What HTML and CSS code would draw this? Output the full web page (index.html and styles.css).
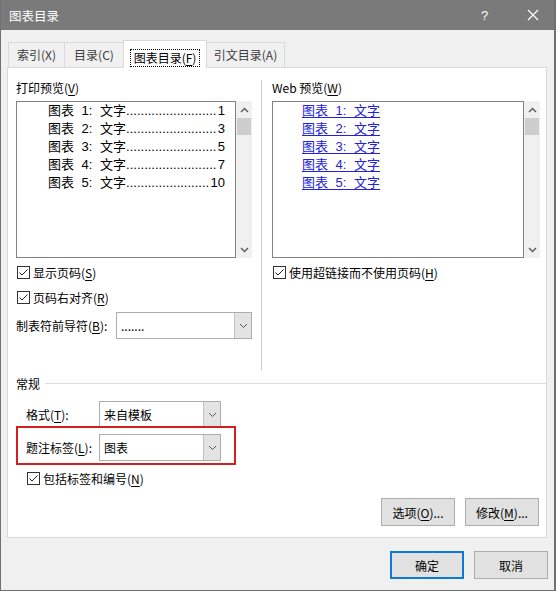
FILE: index.html
```html
<!DOCTYPE html>
<html lang="zh-CN">
<head>
<meta charset="utf-8">
<title>图表目录</title>
<link rel="stylesheet" href="styles.css">
</head>
<body>
<div class="window">
  <div class="titlebar">
    <span class="title">图表目录</span>
    <span class="help">?</span>
    <span class="close"><svg width="12" height="12" viewBox="0 0 12 12"><path d="M1 1 L11 11 M11 1 L1 11" stroke="#fff" stroke-width="1.2" fill="none"/></svg></span>
  </div>

  <div class="tabs">
    <div class="tab t1">索引(X)</div>
    <div class="tab t2">目录(C)</div>
    <div class="tab active"><span class="focus">图表目录(<u>F</u>)</span></div>
    <div class="tab t4">引文目录(A)</div>
  </div>

  <div class="panel">
    <div class="top">
      <div class="col left">
        <div class="label">打印预览(<u>V</u>)</div>
        <div class="listrow">
          <div class="list print">
            <div class="entry"><span class="cap">图表 1: 文字</span><span class="dots">.........................</span><span class="num">1</span></div>
            <div class="entry"><span class="cap">图表 2: 文字</span><span class="dots">.........................</span><span class="num">3</span></div>
            <div class="entry"><span class="cap">图表 3: 文字</span><span class="dots">.........................</span><span class="num">5</span></div>
            <div class="entry"><span class="cap">图表 4: 文字</span><span class="dots">.........................</span><span class="num">7</span></div>
            <div class="entry"><span class="cap">图表 5: 文字</span><span class="dots">.......................</span><span class="num">10</span></div>
          </div>
          <div class="sb">
            <div class="sb-arrow"><svg width="9" height="6" viewBox="0 0 9 6"><path d="M1 5 L4.5 1.5 L8 5" stroke="#606060" stroke-width="1.5" fill="none"/></svg></div>
            <div class="sb-thumb"></div>
            <div class="sb-space"></div>
            <div class="sb-arrow"><svg width="9" height="6" viewBox="0 0 9 6"><path d="M1 1 L4.5 4.5 L8 1" stroke="#606060" stroke-width="1.5" fill="none"/></svg></div>
          </div>
        </div>
        <div class="check c1">
          <span class="box"><svg width="13" height="13" viewBox="0 0 13 13"><rect x="0.5" y="0.5" width="12" height="12" fill="#fff" stroke="#333"/><path d="M2.5 6.5 L5 9 L10.5 3.5" stroke="#222" stroke-width="1" fill="none"/></svg></span>
          <span>显示页码(<u>S</u>)</span>
        </div>
        <div class="check c2">
          <span class="box"><svg width="13" height="13" viewBox="0 0 13 13"><rect x="0.5" y="0.5" width="12" height="12" fill="#fff" stroke="#333"/><path d="M2.5 6.5 L5 9 L10.5 3.5" stroke="#222" stroke-width="1" fill="none"/></svg></span>
          <span>页码右对齐(<u>R</u>)</span>
        </div>
        <div class="field leader">
          <span class="flabel wide">制表符前导符(<u>B</u>):</span>
          <div class="combo w136">
            <span class="val">.......</span>
            <span class="cbtn"><svg width="9" height="6" viewBox="0 0 9 6"><path d="M1 1 L4.5 4.5 L8 1" stroke="#555" stroke-width="1" fill="none"/></svg></span>
          </div>
        </div>
      </div>

      <div class="vdiv"></div>

      <div class="col right">
        <div class="label">Web 预览(<u>W</u>)</div>
        <div class="listrow">
          <div class="list web">
            <div class="entry"><span class="link">图表 1: 文字</span></div>
            <div class="entry"><span class="link">图表 2: 文字</span></div>
            <div class="entry"><span class="link">图表 3: 文字</span></div>
            <div class="entry"><span class="link">图表 4: 文字</span></div>
            <div class="entry"><span class="link">图表 5: 文字</span></div>
          </div>
          <div class="sb">
            <div class="sb-arrow"><svg width="9" height="6" viewBox="0 0 9 6"><path d="M1 5 L4.5 1.5 L8 5" stroke="#606060" stroke-width="1.5" fill="none"/></svg></div>
            <div class="sb-thumb"></div>
            <div class="sb-space"></div>
            <div class="sb-arrow"><svg width="9" height="6" viewBox="0 0 9 6"><path d="M1 1 L4.5 4.5 L8 1" stroke="#606060" stroke-width="1.5" fill="none"/></svg></div>
          </div>
        </div>
        <div class="check c3">
          <span class="box"><svg width="13" height="13" viewBox="0 0 13 13"><rect x="0.5" y="0.5" width="12" height="12" fill="#fff" stroke="#333"/><path d="M2.5 6.5 L5 9 L10.5 3.5" stroke="#222" stroke-width="1" fill="none"/></svg></span>
          <span>使用超链接而不使用页码(<u>H</u>)</span>
        </div>
      </div>
    </div>

    <div class="section">
      <span>常规</span>
      <span class="hline"></span>
    </div>

    <div class="general">
      <div class="field f1">
        <span class="flabel">格式(<u>T</u>):</span>
        <div class="combo w122">
          <span class="val">来自模板</span>
          <span class="cbtn"><svg width="9" height="6" viewBox="0 0 9 6"><path d="M1 1 L4.5 4.5 L8 1" stroke="#555" stroke-width="1" fill="none"/></svg></span>
        </div>
      </div>
      <div class="field f2">
        <span class="flabel">题注标签(<u>L</u>):</span>
        <div class="combo w122">
          <span class="val">图表</span>
          <span class="cbtn"><svg width="9" height="6" viewBox="0 0 9 6"><path d="M1 1 L4.5 4.5 L8 1" stroke="#555" stroke-width="1" fill="none"/></svg></span>
        </div>
      </div>
      <div class="check c4">
        <span class="box"><svg width="13" height="13" viewBox="0 0 13 13"><rect x="0.5" y="0.5" width="12" height="12" fill="#fff" stroke="#333"/><path d="M2.5 6.5 L5 9 L10.5 3.5" stroke="#222" stroke-width="1" fill="none"/></svg></span>
        <span>包括标签和编号(<u>N</u>)</span>
      </div>
    </div>

    <div class="panel-buttons">
      <button class="btn">选项(<u>O</u>)...</button>
      <button class="btn">修改(<u>M</u>)...</button>
    </div>

    <div class="highlight"></div>
  </div>

  <div class="footer">
    <button class="btn big primary">确定</button>
    <button class="btn big">取消</button>
  </div>
</div>
</body>
</html>
```

FILE: styles.css
```css
* { box-sizing: border-box; }
html, body { margin: 0; padding: 0; }
body {
  font-family: "Noto Sans CJK SC", "Microsoft YaHei", sans-serif;
  font-size: 12px;
  color: #000;
  background: #f0f0f0;
}
u { text-decoration: underline; text-underline-offset: 2px; }

.window {
  width: 556px;
  height: 591px;
  background: #f0f0f0;
  border: 1px solid #707070;
  border-top: 0;
  border-right-width: 2px;
}

.titlebar {
  height: 30px;
  background: #7a7a7a;
  color: #fff;
  display: flex;
  align-items: center;
  padding-left: 8px;
  font-size: 12.5px;
}
.titlebar .title { flex: 1; }
.titlebar .help { width: 10px; margin-right: 36px; font-family: "Liberation Sans", sans-serif; font-size: 13px; }
.titlebar .close { width: 12px; height: 12px; margin-right: 15px; display: flex; }

.tabs {
  height: 37px;
  display: flex;
  align-items: flex-end;
  padding-left: 7px;
  color: #3c3c3c;
}
.tab {
  height: 25px;
  border: 1px solid #d9d9d9;
  border-bottom: 0;
  background: #f0f0f0;
  display: flex;
  justify-content: center;
  align-items: flex-start;
  padding-top: 4px;
  line-height: 16px;
  white-space: nowrap;
}
.tab + .tab { margin-left: -1px; }
.t1 { width: 57px; }
.t2 { width: 60px; }
.t4 { width: 79px; }
.tab.active {
  width: 84px;
  height: 28px;
  background: #fff;
  margin-bottom: -1px;
  position: relative;
  z-index: 1;
  color: #000;
  padding-top: 8px;
  justify-content: center;
}
.focus {
  border: 1px dotted #000;
  padding: 0 3px;
  height: 18px;
  line-height: 16px;
}

.panel {
  position: relative;
  margin-left: 6px;
  width: 540px;
  height: 471px;
  background: #fff;
  border: 1px solid #d9d9d9;
  padding: 0 6px 0 8px;
}

.top { display: flex; height: 302px; }
.col { padding-top: 12px; }
.col.left { width: 236px; }
.col.right { width: 268px; margin-left: 10px; }
.vdiv { width: 1px; margin-left: 9px; margin-top: 12px; height: 290px; background: #c8c8c8; }

.label { height: 16px; line-height: 16px; }

.listrow { display: flex; margin-top: 5px; height: 157px; }
.list {
  border: 1px solid #828282;
  background: #fff;
  height: 157px;
  font-family: "Liberation Sans", "Noto Sans CJK SC", sans-serif;
  font-size: 13px;
}
.list.print { width: 220px; padding: 0 10px 0 31px; }
.list.web { width: 252px; padding: 0 0 0 29px; }
.entry { height: 18px; line-height: 18px; display: flex; white-space: pre; }
.cap, .link { word-spacing: 4px; }
.dots { letter-spacing: 0; }
.num { margin-left: auto; text-align: right; }
.link { color: #2222dd; text-decoration: underline; text-underline-offset: 2px; }

.sb { width: 16px; height: 157px; background: #f0f0f0; display: flex; flex-direction: column; }
.sb-arrow { height: 17px; display: flex; align-items: center; justify-content: center; }
.sb-thumb { height: 17px; background: #cdcdcd; margin: 0 1px; }
.sb-space { flex: 1; }

.check { display: flex; align-items: center; height: 17px; }
.check .box { width: 13px; height: 13px; display: flex; margin-right: 3px; margin-left: 1px; }
.c1 { margin-top: 6px; }
.c2 { margin-top: 8px; }
.c3 { margin-top: 6px; }
.c4 { margin-top: 9px; }

.field { display: flex; align-items: center; height: 27px; }
.leader { margin-top: 6px; }
.flabel { width: 73px; }
.flabel.wide { width: 100px; }

.combo {
  display: flex;
  height: 27px;
  border: 1px solid #acacac;
  background: #fff;
}
.w136 { width: 136px; }
.w122 { width: 122px; }
.combo .val { flex: 1; padding-left: 4px; line-height: 25px; }
.cbtn {
  width: 17px;
  background: #e3e3e3;
  border-left: 1px solid #c2c2c2;
  display: flex;
  align-items: center;
  justify-content: center;
}

.section { display: flex; align-items: center; height: 16px; margin-top: 5px; }
.hline { flex: 1; height: 1px; background: #dcdcdc; margin-left: 5px; margin-right: -6px; }

.general { padding-left: 10px; }
.f1 { margin-top: 10px; }
.f2 { margin-top: 6px; }

.panel-buttons { display: flex; justify-content: flex-end; gap: 10px; margin-top: 11px; margin-right: 1px; }

.btn {
  width: 74px;
  height: 28px;
  background: #e1e1e1;
  border: 1px solid #adadad;
  font-family: inherit;
  font-size: 12px;
  color: #000;
  padding: 0;
  margin: 0;
}
.btn.primary { border: 2px solid #0f78d7; }

.highlight {
  position: absolute;
  left: 8px;
  top: 358px;
  width: 220px;
  height: 39px;
  border: 2px solid #d21f1f;
}

.footer { display: flex; justify-content: flex-end; gap: 10px; margin-top: 13px; margin-right: 6px; }
```
